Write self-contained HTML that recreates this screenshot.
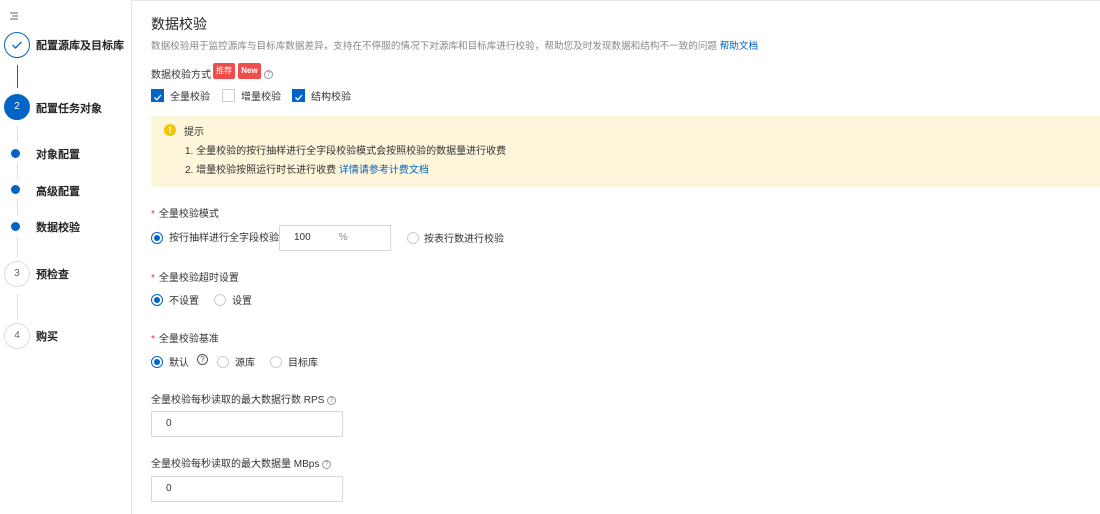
<!DOCTYPE html>
<html><head><meta charset="utf-8"><style>
*{margin:0;padding:0;box-sizing:border-box}
body{width:1100px;height:514px;overflow:hidden;background:#fff;font-family:"Liberation Sans","Noto Sans CJK SC",sans-serif;color:#333;position:relative}
.a{position:absolute;white-space:nowrap}
.sb{left:0;top:0;width:132px;height:514px;border-right:1px solid #e5e5e5}
.circ{position:absolute;width:26px;height:26px;border-radius:50%;border:1px solid #ddd;text-align:center;line-height:24px;font-size:10px;color:#666;background:#fff}
.dot{position:absolute;width:9px;height:9px;border-radius:50%;background:#0064c8}
.vl{position:absolute;left:17px;width:1px;background:#ddd}
.st{position:absolute;left:36px;font-size:11px;color:#222;font-weight:500;-webkit-text-stroke:0.25px #222}
.lbl{font-size:10px;color:#333}
.star{color:#e33;font-size:10px;margin-right:4px}
.radio{position:absolute;width:12px;height:12px;border-radius:50%;border:1px solid #ccc;background:#fff}
.radio.on{border:1px solid #0064c8}
.radio.on::after{content:"";position:absolute;left:2px;top:2px;width:6px;height:6px;border-radius:50%;background:#0064c8}
.cb{position:absolute;width:13px;height:13px;border:1px solid #ccc;background:#fff}
.cb.on{background:#0064c8;border-color:#0064c8}
.t{font-size:10px;color:#333}
.inp{position:absolute;border:1px solid #d8d8d8;background:#fff;font-size:10px;color:#333;padding-left:14px}
.q{display:inline-block;width:9px;height:9px;border:1px solid #999;border-radius:50%;font-size:7px;line-height:8px;text-align:center;color:#999;vertical-align:middle}
</style></head><body>
<div class="a" style="left:132px;top:0;width:968px;height:1px;background:#e5e5e5"></div>
<div class="a sb"></div>
<svg class="a" style="left:9px;top:12px" width="10" height="8"><path d="M1 1H9M3 4H9M1 7H9" stroke="#666" stroke-width="1"/></svg>
<div class="circ" style="left:4px;top:32px;border-color:#0064c8"><svg width="12" height="10" style="margin-top:7px"><path d="M1.5 5L4.5 8L10.5 2" stroke="#0064c8" stroke-width="1.3" fill="none"/></svg></div>
<div class="st" style="top:37px">配置源库及目标库</div>
<div class="vl" style="top:65px;height:23px;background:#0064c8"></div>
<div class="circ" style="left:4px;top:94px;background:#0064c8;border-color:#0064c8;color:#fff">2</div>
<div class="st" style="top:100px">配置任务对象</div>
<div class="vl" style="top:126px;height:16px"></div>
<div class="dot" style="left:11px;top:149px"></div>
<div class="st" style="top:146px">对象配置</div>
<div class="vl" style="top:163px;height:16px"></div>
<div class="dot" style="left:11px;top:185px"></div>
<div class="st" style="top:183px">高级配置</div>
<div class="vl" style="top:199px;height:16px"></div>
<div class="dot" style="left:11px;top:222px"></div>
<div class="st" style="top:219px">数据校验</div>
<div class="vl" style="top:237px;height:20px"></div>
<div class="circ" style="left:4px;top:261px">3</div>
<div class="st" style="top:266px">预检查</div>
<div class="vl" style="top:294px;height:25px"></div>
<div class="circ" style="left:4px;top:323px">4</div>
<div class="st" style="top:328px">购买</div>

<div class="a" style="left:151px;top:14px;font-size:14px;color:#222">数据校验</div>
<div class="a" style="left:151px;top:38px;font-size:9.6px;color:#888">数据校验用于监控源库与目标库数据差异，支持在不停服的情况下对源库和目标库进行校验，帮助您及时发现数据和结构不一致的问题 <span style="color:#0064c8">帮助文档</span></div>
<div class="a lbl" style="left:151px;top:66px">数据校验方式</div>
<div class="a" style="left:213px;top:63px;width:22px;height:16px;background:#f04c4c;color:#fff;font-size:8px;text-align:center;line-height:16px;border-radius:2px">推荐</div>
<div class="a" style="left:238px;top:63px;width:23px;height:16px;background:#f04c4c;color:#fff;font-size:8px;text-align:center;line-height:16px;border-radius:2px;font-weight:bold">New</div>
<div class="a" style="left:264px;top:66px"><span class="q">?</span></div>
<div class="cb on" style="left:151px;top:89px"><svg width="11" height="11"><path d="M2.5 5.5L4.8 7.8L9 3" stroke="#fff" stroke-width="1.3" fill="none"/></svg></div>
<div class="a t" style="left:170px;top:88px">全量校验</div>
<div class="cb" style="left:222px;top:89px"></div>
<div class="a t" style="left:241px;top:88px">增量校验</div>
<div class="cb on" style="left:292px;top:89px"><svg width="11" height="11"><path d="M2.5 5.5L4.8 7.8L9 3" stroke="#fff" stroke-width="1.3" fill="none"/></svg></div>
<div class="a t" style="left:311px;top:88px">结构校验</div>

<div class="a" style="left:151px;top:116px;width:949px;height:71px;background:#fdf6db"></div>
<div class="a" style="left:164px;top:124px;width:12px;height:12px;border-radius:50%;background:#f5c400;color:#fff;font-size:9px;font-weight:bold;text-align:center;line-height:12px">!</div>
<div class="a t" style="left:184px;top:123px">提示</div>
<div class="a t" style="left:185px;top:142px">1. 全量校验的按行抽样进行全字段校验模式会按照校验的数据量进行收费</div>
<div class="a t" style="left:185px;top:161px">2. 增量校验按照运行时长进行收费 <span style="color:#0064c8">详情请参考计费文档</span></div>

<div class="a lbl" style="left:151px;top:205px"><span class="star">*</span>全量校验模式</div>
<div class="radio on" style="left:151px;top:232px"></div>
<div class="a t" style="left:169px;top:229px">按行抽样进行全字段校验</div>
<div class="inp" style="left:279px;top:225px;width:112px;height:26px;line-height:24px">100<span style="margin-left:28px;color:#888">%</span></div>
<div class="radio" style="left:407px;top:232px"></div>
<div class="a t" style="left:424px;top:230px">按表行数进行校验</div>

<div class="a lbl" style="left:151px;top:269px"><span class="star">*</span>全量校验超时设置</div>
<div class="radio on" style="left:151px;top:294px"></div>
<div class="a t" style="left:169px;top:292px">不设置</div>
<div class="radio" style="left:214px;top:294px"></div>
<div class="a t" style="left:232px;top:292px">设置</div>

<div class="a lbl" style="left:151px;top:330px"><span class="star">*</span>全量校验基准</div>
<div class="radio on" style="left:151px;top:356px"></div>
<div class="a t" style="left:169px;top:354px">默认</div>
<div class="a" style="left:197px;top:354px;width:11px;height:11px;border:1px solid #555;border-radius:50%;font-size:8px;line-height:9px;text-align:center;color:#555">?</div>
<div class="radio" style="left:217px;top:356px"></div>
<div class="a t" style="left:235px;top:354px">源库</div>
<div class="radio" style="left:270px;top:356px"></div>
<div class="a t" style="left:288px;top:354px">目标库</div>

<div class="a lbl" style="left:151px;top:391px">全量校验每秒读取的最大数据行数 RPS <span class="q">?</span></div>
<div class="inp" style="left:151px;top:411px;width:192px;height:26px;line-height:24px;padding-left:14px">0</div>
<div class="a lbl" style="left:151px;top:455px">全量校验每秒读取的最大数据量 MBps <span class="q">?</span></div>
<div class="inp" style="left:151px;top:476px;width:192px;height:26px;line-height:24px;padding-left:14px">0</div>
</body></html>
